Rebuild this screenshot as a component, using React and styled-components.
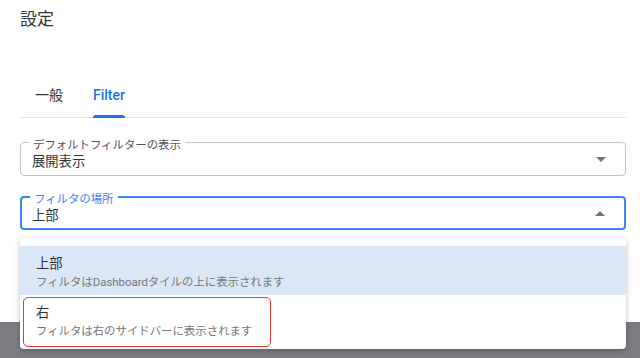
import React from "react";
import styled, { createGlobalStyle } from "styled-components";

const GlobalStyle = createGlobalStyle`
  html, body {
    margin: 0;
    padding: 0;
    background: #ffffff;
    font-family: Roboto, "Noto Sans CJK JP", sans-serif;
    color: #333;
  }
`;

const Page = styled.div`
  width: 640px;
  height: 358px;
  display: flex;
  flex-direction: column;
  overflow: hidden;
`;

const Content = styled.div`
  padding: 9px 14px 0 20px;
  height: 313px;
  display: flex;
  flex-direction: column;
`;

const Title = styled.h1`
  margin: 0;
  font-size: 17px;
  font-weight: 400;
  line-height: 20px;
  color: #333;
`;

const TabBar = styled.div`
  margin-top: 52px;
  display: flex;
  gap: 30px;
  padding-left: 15px;
  border-bottom: 1px solid #e6e6e6;
  height: 36px;
`;

const Tab = styled.div`
  position: relative;
  font-size: 14px;
  line-height: 20px;
  padding-top: 4px;
  font-weight: ${(p) => (p.active ? 500 : 400)};
  color: ${(p) => (p.active ? "#1a73e8" : "#333")};

  &::after {
    content: "";
    display: ${(p) => (p.active ? "block" : "none")};
    position: absolute;
    left: 0;
    right: 0;
    bottom: -1px;
    height: 3px;
    border-radius: 3px 3px 0 0;
    background: #1a73e8;
  }
`;

const Field = styled.div`
  position: relative;
  margin-top: ${(p) => p.top}px;
  height: 34px;
  box-sizing: border-box;
  border: ${(p) => (p.focused ? "2px solid #3b82f6" : "1px solid #c4c4c4")};
  border-radius: 4px;
  display: flex;
  align-items: center;
  padding: ${(p) => (p.focused ? "5px 0 0 10px" : "5px 0 0 11px")};
`;

const Label = styled.span`
  position: absolute;
  left: 8px;
  top: ${(p) => (p.focused ? "-5px" : "-4px")};
  padding: 0 4px;
  background: #fff;
  font-size: 11.4px;
  line-height: 12px;
  color: ${(p) => (p.focused ? "#3b82f6" : "#555")};
`;

const Value = styled.span`
  font-size: 13.3px;
  line-height: 18px;
  color: #333;
  flex: 1;
`;

const Arrow = styled.span`
  width: 0;
  height: 0;
  margin-right: 19px;
  margin-top: -4px;
  border-left: 5px solid transparent;
  border-right: 5px solid transparent;
  ${(p) =>
    p.up
      ? "border-bottom: 5px solid #757575;"
      : "border-top: 5px solid #757575;"}
`;

const Menu = styled.div`
  position: absolute;
  left: -2px;
  right: -2px;
  top: 40px;
  z-index: 2;
  background: #fff;
  border-radius: 4px;
  box-shadow: 0 2px 6px rgba(0, 0, 0, 0.22), 0 0 2px rgba(0, 0, 0, 0.08);
  padding: 8px 0 5px;
`;

const Option = styled.div`
  position: relative;
  height: 49px;
  box-sizing: border-box;
  padding: 9px 16px 0 16px;
  background: ${(p) => (p.selected ? "#d9e7f8" : "#fff")};
`;

const OptionTitle = styled.div`
  font-size: 13.3px;
  line-height: 18px;
  color: #333;
`;

const OptionDesc = styled.div`
  margin-top: 1px;
  font-size: 11.4px;
  line-height: 16px;
  color: #777;
`;

const Highlight = styled.div`
  position: absolute;
  left: 3px;
  top: 2px;
  width: 248px;
  height: 50px;
  box-sizing: border-box;
  border: 1.5px solid #e53935;
  border-radius: 5px;
  pointer-events: none;
`;

const Footer = styled.div`
  flex: 1;
  background: #7b7d80;
`;

export default function App() {
  return (
    <>
      <GlobalStyle />
      <Page>
        <Content>
          <Title>設定</Title>
          <TabBar>
            <Tab>一般</Tab>
            <Tab active>Filter</Tab>
          </TabBar>
          <Field top={24}>
            <Label>デフォルトフィルターの表示</Label>
            <Value>展開表示</Value>
            <Arrow />
          </Field>
          <Field top={20} focused>
            <Label focused>フィルタの場所</Label>
            <Value>上部</Value>
            <Arrow up />
            <Menu>
              <Option selected>
                <OptionTitle>上部</OptionTitle>
                <OptionDesc>フィルタはDashboardタイルの上に表示されます</OptionDesc>
              </Option>
              <Option>
                <OptionTitle>右</OptionTitle>
                <OptionDesc>フィルタは右のサイドバーに表示されます</OptionDesc>
                <Highlight />
              </Option>
            </Menu>
          </Field>
        </Content>
        <Footer />
      </Page>
    </>
  );
}
